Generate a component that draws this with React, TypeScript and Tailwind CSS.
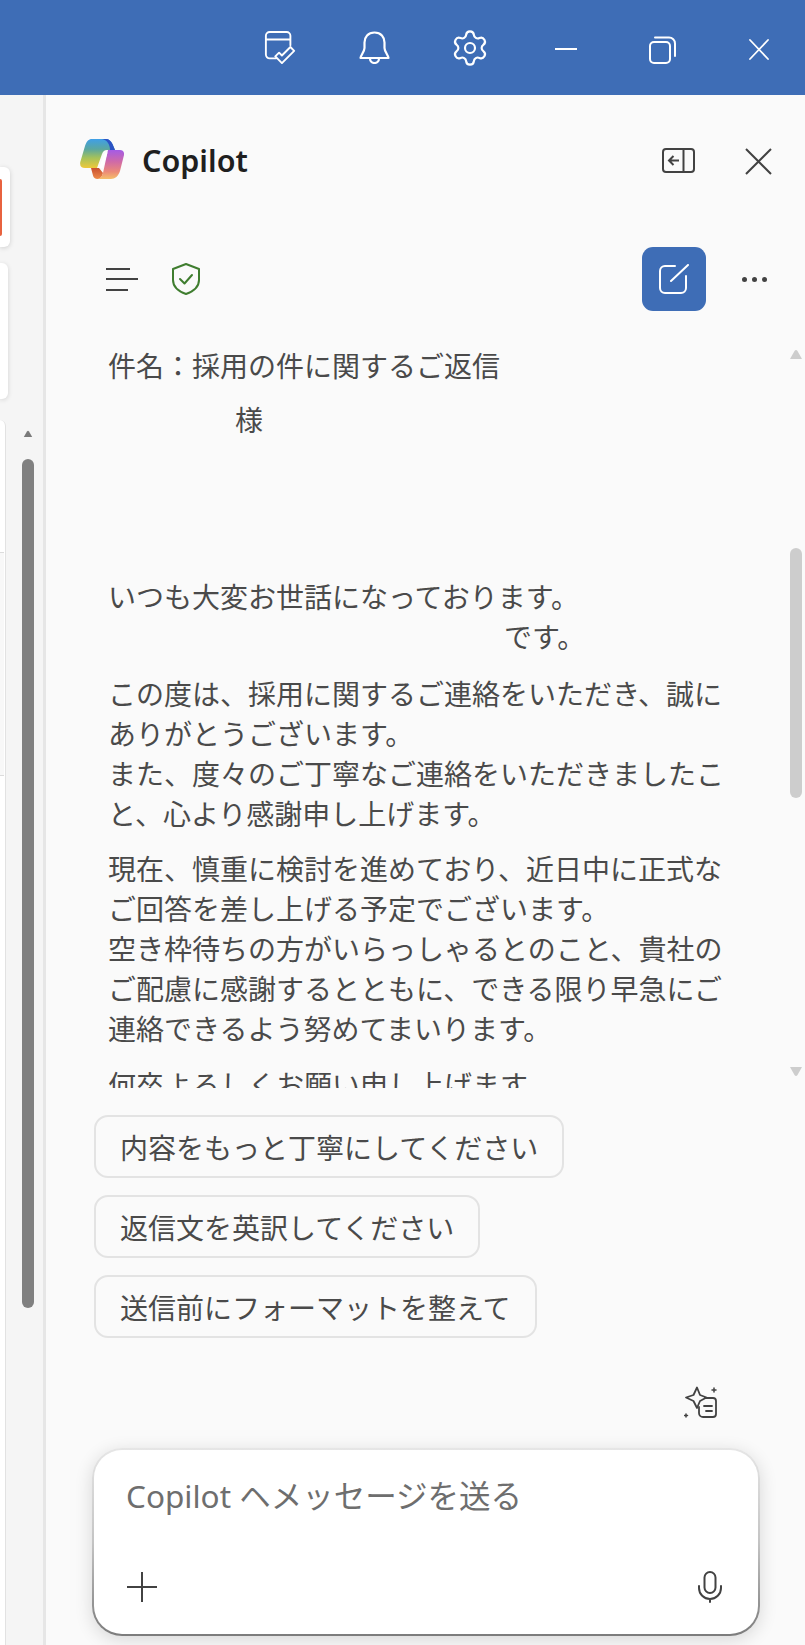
import { Settings } from "lucide-react";

const suggestions = [
  "内容をもっと丁寧にしてください",
  "返信文を英訳してください",
  "送信前にフォーマットを整えて",
];

function CopilotLogo() {
  return (
    <svg width="44" height="40" viewBox="0 0 44 40" fill="none">
      <defs>
        <linearGradient id="leftRibbon" x1="0" y1="0" x2="0" y2="1">
          <stop offset="0" stopColor="#3f9fe8" />
          <stop offset="0.35" stopColor="#5aa7a0" />
          <stop offset="0.65" stopColor="#a5c25a" />
          <stop offset="1" stopColor="#efc93a" />
        </linearGradient>
        <linearGradient id="rightRibbon" x1="0" y1="0" x2="0" y2="1">
          <stop offset="0" stopColor="#a45be6" />
          <stop offset="0.4" stopColor="#cf6aa8" />
          <stop offset="0.75" stopColor="#ec8a78" />
          <stop offset="1" stopColor="#f5bf6a" />
        </linearGradient>
        <linearGradient id="bottomRibbon" x1="0" y1="0" x2="0" y2="1">
          <stop offset="0" stopColor="#c9502f" />
          <stop offset="1" stopColor="#ee8a4a" />
        </linearGradient>
      </defs>
      <path d="M12 0H26C29 0 31 2 32.5 5L35 11H27C24.5 11 23 12.5 22 15L17 29H5C1.5 29-.5 27 .3 23L5 7C6.5 2.5 8.5 0 12 0Z" fill="url(#leftRibbon)" />
      <path d="M22 0H26C29 0 31 2 32.5 5L35 11H30C30 5 27 1 22 0Z" fill="#2b52c4" />
      <path d="M11 29H19L23 34C22 38 20 40 17.5 40C15 40 13.5 38.5 13 36.5Z" fill="url(#bottomRibbon)" />
      <path d="M28 11H40C43 11 44.5 13 44 16L40 32C38.5 37 35 40 31 40H17.5C20 40 21.8 37.5 23 34Z" fill="url(#rightRibbon)" />
      <path d="M27.5 13.5C25.5 13.5 24.5 14.5 23.8 16.5L19 29H21.5C22.5 29 23 28.5 23.3 27.5Z" fill="#ffffff" />
    </svg>
  );
}

function Arrow({ down, className }: { down?: boolean; className: string }) {
  return (
    <svg width="12" height="10" viewBox="0 0 12 10" className={className}>
      <path d={down ? "M0 0H12L7.5 8Q6 10 4.5 8Z" : "M0 10H12L7.5 2Q6 0 4.5 2Z"} fill="currentColor" />
    </svg>
  );
}

function LeftGutter() {
  return (
    <div className="flex h-full w-[46px] flex-none border-r-[3px] border-[#e6e6e6] bg-[#f5f5f5]">
      {/* cards of the page behind the panel */}
      <div className="flex w-[22px] flex-none flex-col">
        <div className="mt-[72px] flex h-[80px] w-[10px] items-center rounded-r-[6px] bg-white shadow-[0_1px_5px_rgba(0,0,0,0.16)]">
          <div className="h-[57px] w-[2px] rounded-r-sm bg-[#e8623f]" />
        </div>
        <div className="mt-[16px] h-[136px] w-[8px] rounded-r-[6px] bg-white shadow-[0_1px_5px_rgba(0,0,0,0.14)]" />
        <div className="mt-[21px] w-[6px] flex-1 rounded-tr-[6px] border-r border-[#e2e2e2] bg-white">
          <div className="mt-[132px] h-[224px] w-[4px] border-y border-[#dcdcdc] bg-[#f8f8f8]" />
        </div>
      </div>
      <div className="flex w-[12px] flex-none flex-col items-center">
        <Arrow className="mt-[335px] h-[7px] text-[#7a7a7a]" />
        <div className="mt-[22px] h-[849px] w-[12px] rounded-full bg-[#808080]" />
      </div>
    </div>
  );
}

function EmailBody() {
  return (
    <div className="h-[750px] w-[680px] flex-none overflow-hidden pl-[62px] pt-[7px] text-[28px] leading-[40px] text-[#4a4a4a]">
      <div className="w-[618px]">
        <p>件名：採用の件に関するご返信</p>
        <p className="mt-[14px] pl-[127px]">様</p>
        <p className="mt-[137px]">いつも大変お世話になっております。</p>
        <p className="pl-[396px]">です。</p>
        <p className="mt-[17px]">
          この度は、採用に関するご連絡をいただき、誠にありがとうございます。
          <br />
          また、度々のご丁寧なご連絡をいただきましたこと、心より感謝申し上げます。
        </p>
        <p className="mt-[15px]">
          現在、慎重に検討を進めており、近日中に正式なご回答を差し上げる予定でございます。
          <br />
          空き枠待ちの方がいらっしゃるとのこと、貴社のご配慮に感謝するとともに、できる限り早急にご連絡できるよう努めてまいります。
        </p>
        <p className="mt-[16px]">何卒よろしくお願い申し上げます。</p>
      </div>
    </div>
  );
}

export default function App() {
  return (
    <div className="flex h-[1645px] w-[805px] flex-col overflow-hidden bg-[#fafafa] font-['Noto_Sans_CJK_JP','Noto_Sans',sans-serif]">
      {/* Title bar */}
      <div className="flex h-[95px] flex-none items-start bg-[#3e6db6] text-white">
        <svg width="33" height="33" viewBox="0 0 33 35" fill="none" stroke="currentColor" strokeWidth="2" strokeLinejoin="round" strokeLinecap="round" className="ml-[264px] mt-[31px]">
          <path d="M12 29H5A4 4 0 0 1 1 25V5A4 4 0 0 1 5 1H23A4 4 0 0 1 27 5V15M1 9H27" />
          <path d="M11 27L15 23L18 26L27 17L31 21L18 34Z" />
        </svg>
        <svg width="33" height="33" viewBox="0 0 31 33" fill="none" stroke="currentColor" strokeWidth="2.2" strokeLinejoin="round" className="ml-[61px] mt-[31px]">
          <path d="M15.5 1.5C9 1.5 5.500 6 5.500 11.500V17C5.500 20.500 2 24 1.500 27H29.500C29 24 25.500 20.500 25.500 17V11.500C25.500 6 22 1.500 15.500 1.500Z" />
          <path d="M11 27.500A4.500 4.500 0 0 0 20 27.500" />
        </svg>
        <Settings size={40} strokeWidth={1.3} className="ml-[59px] mt-[28px]" />
        <svg width="22" height="4" viewBox="0 0 22 4" className="ml-[65px] mt-[47px]">
          <path d="M0 2H22" stroke="currentColor" strokeWidth="2" />
        </svg>
        <svg width="27" height="28" viewBox="0 0 27 28" fill="none" stroke="currentColor" strokeWidth="2" className="ml-[72px] mt-[36px]">
          <rect x="1" y="6" width="20" height="21" rx="4" />
          <path d="M6 1.500H20A6 6 0 0 1 26 7.500V20" strokeLinecap="round" />
        </svg>
        <svg width="20" height="21" viewBox="0 0 20 21" className="ml-[73px] mt-[39px]">
          <path d="M1 1L19 20M19 1L1 20" stroke="currentColor" strokeWidth="1.8" strokeLinecap="round" />
        </svg>
      </div>

      <div className="flex min-h-0 flex-1">
        <LeftGutter />

        <div className="flex min-w-0 flex-1 flex-col">
          {/* Panel header */}
          <div className="mt-[28px] flex h-[72px] flex-none items-center">
            <div className="ml-[34px] flex-none">
              <CopilotLogo />
            </div>
            <div className="ml-[18px] mt-[4px] font-['Noto_Sans',sans-serif] text-[30.5px] font-semibold text-[#1f1f1f]">Copilot</div>
            <svg width="33" height="25" viewBox="0 0 33 25" fill="none" stroke="#424242" strokeWidth="2" className="mb-[-2px] ml-auto">
              <rect x="1" y="1" width="31" height="23" rx="3" />
              <path d="M21.500 1V24M17 12.500H7M11.500 8L7 12.500L11.500 17" />
            </svg>
            <svg width="27" height="27" viewBox="0 0 27 27" className="mb-[-4px] ml-[50px] mr-[33px]">
              <path d="M1 1L26 26M26 1L1 26" stroke="#424242" strokeWidth="2" />
            </svg>
          </div>

          {/* Toolbar */}
          <div className="mt-[52px] flex h-[64px] flex-none items-center">
            <div className="ml-[60px] flex w-[32px] flex-col gap-[8.5px]">
              <div className="h-[2px] w-[24px] bg-[#424242]" />
              <div className="h-[2px] w-[32px] bg-[#424242]" />
              <div className="h-[2px] w-[22px] bg-[#424242]" />
            </div>
            <svg width="28" height="32" viewBox="0 0 28 32" fill="none" stroke="#3f7d2f" strokeWidth="2" strokeLinejoin="round" className="ml-[34px]">
              <path d="M14 1L27 6V17C27 24 21 28.500 14 31C7 28.500 1 24 1 17V6Z" />
              <path d="M8 16L12.500 20.500L20 12" strokeLinecap="round" />
            </svg>
            <div className="ml-auto flex h-[64px] w-[64px] items-center justify-center rounded-[11px] bg-[#3e6db6] text-white">
              <svg width="30" height="30" viewBox="0 0 30 30" fill="none" stroke="currentColor" strokeWidth="2" strokeLinecap="round">
                <path d="M16 2H6A5 5 0 0 0 1 7V24A5 5 0 0 0 6 29H22A5 5 0 0 0 27 24V12" />
                <path d="M12 17L29 1" />
              </svg>
            </div>
            <div className="ml-[36px] mr-[38px] flex flex-none gap-[5px]">
              <div className="h-[5px] w-[5px] rounded-full bg-[#424242]" />
              <div className="h-[5px] w-[5px] rounded-full bg-[#424242]" />
              <div className="h-[5px] w-[5px] rounded-full bg-[#424242]" />
            </div>
          </div>

          {/* Message and its scrollbar */}
          <div className="mt-[27px] flex h-[750px] flex-none">
            <EmailBody />
            <div className="ml-[64px] flex w-[12px] flex-none flex-col text-[#cdcdcd]">
              <Arrow className="mt-[11px] flex-none" />
              <div className="mt-[189px] h-[250px] w-[12px] flex-none rounded-[6px] bg-[#cdcdcd]" />
              <Arrow down className="mt-[269px] flex-none" />
            </div>
          </div>

          {/* Suggestions */}
          <div className="mt-[27px] flex flex-none flex-col items-start gap-[17px] pl-[48px]">
            {suggestions.map((s) => (
              <button key={s} className="h-[63px] rounded-[14px] border-2 border-[#e3e3e3] bg-[#fafafa] px-[24px] text-[28px] text-[#4a4a4a]">
                {s}
              </button>
            ))}
          </div>

          {/* Prompt guide icon */}
          <div className="mt-[48px] flex flex-none justify-end pr-[87px]">
            <svg width="34" height="33" viewBox="0 0 34 33" fill="none" stroke="#424242" strokeWidth="1.8" strokeLinejoin="round" strokeLinecap="round">
              <path d="M13 1.500L16 9L22.500 11.500L16 15L13 22L9.500 15L2 11.500L9.500 9Z" />
              <path d="M21 12H29A3 3 0 0 1 32 15V28A3 3 0 0 1 29 31H19A4 4 0 0 1 15 27V21" />
              <path d="M20 20H28M22 25H28" />
              <path d="M30 2V6M28 4H32M2 28V31M.5 29.500H3.500" strokeWidth="1.5" />
            </svg>
          </div>

          {/* Composer */}
          <div className="ml-[46px] mt-[29px] h-[188px] w-[668px] flex-none rounded-[30px] bg-linear-to-b from-[#e6e6e6] via-[#c4c4c4] to-[#7c7c7c] p-[2px] shadow-[0_4px_18px_rgba(0,0,0,0.14)]">
            <div className="flex h-full w-full flex-col rounded-[28px] bg-white">
              <div className="ml-[32px] mt-[26px] h-[40px] font-['Noto_Sans','Noto_Sans_CJK_JP',sans-serif] text-[31.5px] leading-[40px] text-[#6e6e6e]">
                Copilot ヘメッセージを送る
              </div>
              <div className="mb-[31px] mt-auto flex items-center justify-between pl-[33px] pr-[36px]">
                <svg width="30" height="30" viewBox="0 0 30 30">
                  <path d="M15 0V30M0 15H30" stroke="#424242" strokeWidth="2" />
                </svg>
                <svg width="24" height="32" viewBox="0 0 24 32" fill="none" stroke="#424242" strokeWidth="2" strokeLinecap="round">
                  <rect x="6.500" y="1" width="11" height="21" rx="5.500" />
                  <path d="M1 15V17A11 11 0 0 0 23 17V15M12 28V31" />
                </svg>
              </div>
            </div>
          </div>
        </div>
      </div>
    </div>
  );
}
